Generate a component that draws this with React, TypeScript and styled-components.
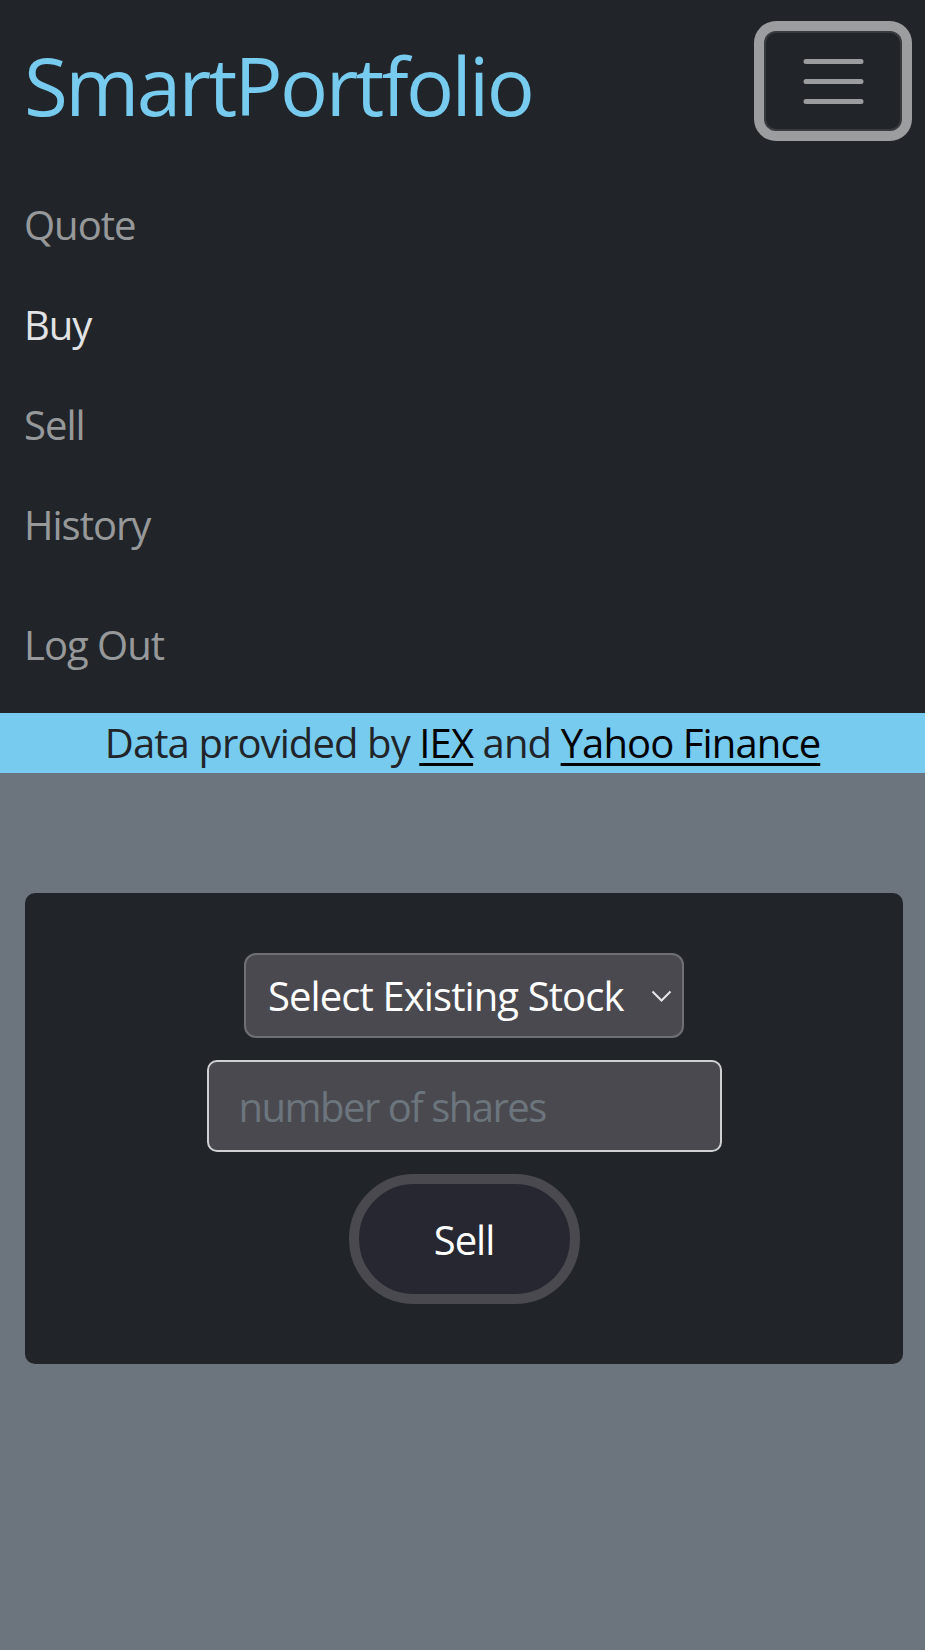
import React from "react";
import styled, { createGlobalStyle } from "styled-components";

const GlobalStyle = createGlobalStyle`
  html, body {
    margin: 0;
    padding: 0;
    background: #6c757d;
  }
  body {
    font-family: "Open Sans", "Noto Sans", sans-serif;
    color: #212529;
    min-height: 1650px;
  }
  * { box-sizing: border-box; }
`;

const Navbar = styled.nav`
  background: #212529;
  padding: 25px 23px 18px 24px;
`;

const HeaderRow = styled.div`
  display: flex;
  justify-content: space-between;
  align-items: flex-start;
`;

const Brand = styled.a`
  font-size: 80px;
  line-height: 120px;
  letter-spacing: -2.6px;
  color: #77cbef;
  text-decoration: none;
`;

const Toggler = styled.button`
  margin-top: 6px;
  width: 138px;
  height: 100px;
  background: transparent;
  border: 2.5px solid rgba(255, 255, 255, 0.1);
  border-radius: 12px;
  box-shadow: 0 0 0 10px #9c9d9f;
  display: flex;
  align-items: center;
  justify-content: center;
  padding: 0;
`;

const NavList = styled.ul`
  list-style: none;
  margin: 30px 0 0;
  padding: 0;
  display: flex;
  flex-direction: column;
`;

const NavItem = styled.li<{ $gapBefore?: boolean }>`
  margin-top: ${(p) => (p.$gapBefore ? "20px" : "0")};
`;

const NavLink = styled.a<{ $active?: boolean }>`
  display: block;
  padding: 20px 0;
  font-size: 40px;
  line-height: 60px;
  letter-spacing: -1px;
  color: ${(p) => (p.$active ? "#e2e3e4" : "rgba(255, 255, 255, 0.55)")};
  text-decoration: none;
`;

const Attribution = styled.div`
  background: #77cbef;
  height: 60px;
  font-size: 40px;
  line-height: 60px;
  letter-spacing: -0.9px;
  text-align: center;
  color: #212529;
  white-space: nowrap;
`;

const AttrLink = styled.a`
  color: #000;
  text-decoration: underline;
  text-decoration-thickness: 3px;
  text-underline-offset: 5px;
`;

const Main = styled.main`
  padding: 120px 22px 0 25px;
`;

const Card = styled.div`
  background: #212529;
  border-radius: 10px;
  padding: 60px 0;
  display: flex;
  flex-direction: column;
  align-items: center;
  gap: 22px;
`;

const SelectWrap = styled.div`
  position: relative;
  width: 440px;
  height: 85px;
`;

const Select = styled.select`
  appearance: none;
  -webkit-appearance: none;
  width: 100%;
  height: 100%;
  background: #4a494f;
  border: 2px solid #706f74;
  border-radius: 12px;
  color: #ffffff;
  font-family: "Open Sans", "Noto Sans", sans-serif;
  font-size: 40px;
  letter-spacing: -0.9px;
  padding: 0 50px 0 22px;
  outline: none;
`;

const Chevron = styled.svg`
  position: absolute;
  right: 12px;
  top: 37px;
  width: 21px;
  height: 13px;
  pointer-events: none;
`;

const SharesInput = styled.input`
  width: 515px;
  height: 92px;
  background: #4a494f;
  border: 2px solid #cfd0d2;
  border-radius: 10px;
  color: #ffffff;
  font-family: "Open Sans", "Noto Sans", sans-serif;
  font-size: 40px;
  letter-spacing: -1.5px;
  padding: 0 30px;
  outline: none;
  &::placeholder {
    color: #6c757d;
  }
`;

const SellButton = styled.button`
  width: 231px;
  height: 130px;
  background: #262730;
  border: 10px solid #4a494f;
  border-radius: 65px;
  color: #ffffff;
  font-family: "Open Sans", "Noto Sans", sans-serif;
  font-size: 40px;
  letter-spacing: -1px;
  padding: 0;
`;

export default function App() {
  return (
    <>
      <GlobalStyle />
      <Navbar>
        <HeaderRow>
          <Brand href="#">SmartPortfolio</Brand>
          <Toggler aria-label="Toggle navigation">
            <svg width="75" height="75" viewBox="0 0 30 30">
              <path
                d="M4 7h22M4 15h22M4 23h22"
                stroke="rgba(255,255,255,0.55)"
                strokeWidth="2"
                strokeLinecap="round"
                fill="none"
              />
            </svg>
          </Toggler>
        </HeaderRow>
        <NavList>
          <NavItem><NavLink href="#">Quote</NavLink></NavItem>
          <NavItem><NavLink href="#" $active>Buy</NavLink></NavItem>
          <NavItem><NavLink href="#">Sell</NavLink></NavItem>
          <NavItem><NavLink href="#">History</NavLink></NavItem>
          <NavItem $gapBefore><NavLink href="#">Log Out</NavLink></NavItem>
        </NavList>
      </Navbar>
      <Attribution>
        Data provided by <AttrLink href="#">IEX</AttrLink> and{" "}
        <AttrLink href="#">Yahoo Finance</AttrLink>
      </Attribution>
      <Main>
        <Card>
          <SelectWrap>
            <Select defaultValue="">
              <option value="" disabled>
                Select Existing Stock
              </option>
            </Select>
            <Chevron viewBox="0 0 21 13">
              <path d="M1.5 1.5 L10.5 10.5 L19.5 1.5" stroke="#e6e6e8" strokeWidth="2" fill="none" />
            </Chevron>
          </SelectWrap>
          <SharesInput type="number" placeholder="number of shares" />
          <SellButton>Sell</SellButton>
        </Card>
      </Main>
    </>
  );
}
